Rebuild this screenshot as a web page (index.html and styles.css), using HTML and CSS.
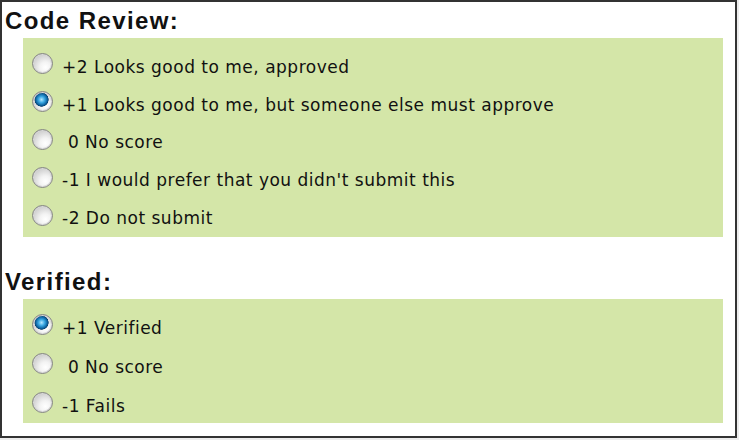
FILE: index.html
```html
<!DOCTYPE html>
<html>
<head>
<meta charset="utf-8">
<link rel="stylesheet" href="styles.css">
</head>
<body>
<div class="frame">
  <section class="group">
    <h2 class="title">Code Review:</h2>
    <div class="panel panel-cr">
      <label class="row"><input type="radio" name="cr" class="radio"><span class="txt">+2 Looks good to me, approved</span></label>
      <label class="row"><input type="radio" name="cr" class="radio" checked><span class="txt">+1 Looks good to me, but someone else must approve</span></label>
      <label class="row"><input type="radio" name="cr" class="radio"><span class="txt">&nbsp;0 No score</span></label>
      <label class="row"><input type="radio" name="cr" class="radio"><span class="txt">-1 I would prefer that you didn't submit this</span></label>
      <label class="row"><input type="radio" name="cr" class="radio"><span class="txt">-2 Do not submit</span></label>
    </div>
  </section>
  <section class="group group-v">
    <h2 class="title">Verified:</h2>
    <div class="panel panel-v">
      <label class="row"><input type="radio" name="v" class="radio" checked><span class="txt">+1 Verified</span></label>
      <label class="row"><input type="radio" name="v" class="radio"><span class="txt">&nbsp;0 No score</span></label>
      <label class="row"><input type="radio" name="v" class="radio"><span class="txt">-1 Fails</span></label>
    </div>
  </section>
</div>
</body>
</html>
```

FILE: styles.css
```css
html, body {
  margin: 0;
  padding: 0;
  background: #ececec;
}
.frame {
  box-sizing: border-box;
  width: 737px;
  height: 438px;
  border: 2px solid #333;
  background: #fff;
  padding: 0 0 0 3px;
}
.group {
  display: flex;
  flex-direction: column;
}
.title {
  margin: 0;
  font-family: "Liberation Sans", Arial, sans-serif;
  font-weight: bold;
  font-size: 24px;
  letter-spacing: 1.4px;
  color: #111;
  line-height: 38px;
  height: 36px;
  padding-left: 0;
}
.group-v {
  margin-top: 26px;
}
.panel {
  margin-left: 18px;
  width: 700px;
  background: #d4e6a8;
  display: flex;
  flex-direction: column;
}
.panel-cr {
  height: 199px;
  box-sizing: border-box;
  padding-top: 7px;
}
.panel-v {
  height: 124px;
  box-sizing: border-box;
  padding-top: 6px;
}
.row {
  height: 37.8px;
  display: flex;
  align-items: center;
  padding-left: 9px;
}
.panel-v .row {
  height: 39px;
}
.radio {
  -webkit-appearance: none;
  appearance: none;
  margin: 0;
  width: 21px;
  height: 21px;
  border-radius: 50%;
  border: 1px solid #858585;
  box-sizing: border-box;
  background: radial-gradient(circle at 65% 70%, #ffffff 0%, #f3f3f3 30%, #d0d0d0 70%, #b0b0b0 100%);
  box-shadow: inset 0 0 0 1px #d8d8d8;
  flex: none;
}
.radio:checked {
  background:
    radial-gradient(circle at 45% 40%, #b6e8ff 0%, #3aa8e2 20%, #0b5f9c 38%, #0a3f6a 44%, rgba(0,0,0,0) 47%),
    radial-gradient(circle at 65% 70%, #ffffff 0%, #f3f3f3 30%, #d0d0d0 70%, #b0b0b0 100%);
}
.txt {
  margin-left: 9px;
  padding-top: 6px;
  font-family: "DejaVu Sans", Verdana, sans-serif;
  font-size: 17px;
  letter-spacing: 0.5px;
  color: #111;
  white-space: pre;
}
```
